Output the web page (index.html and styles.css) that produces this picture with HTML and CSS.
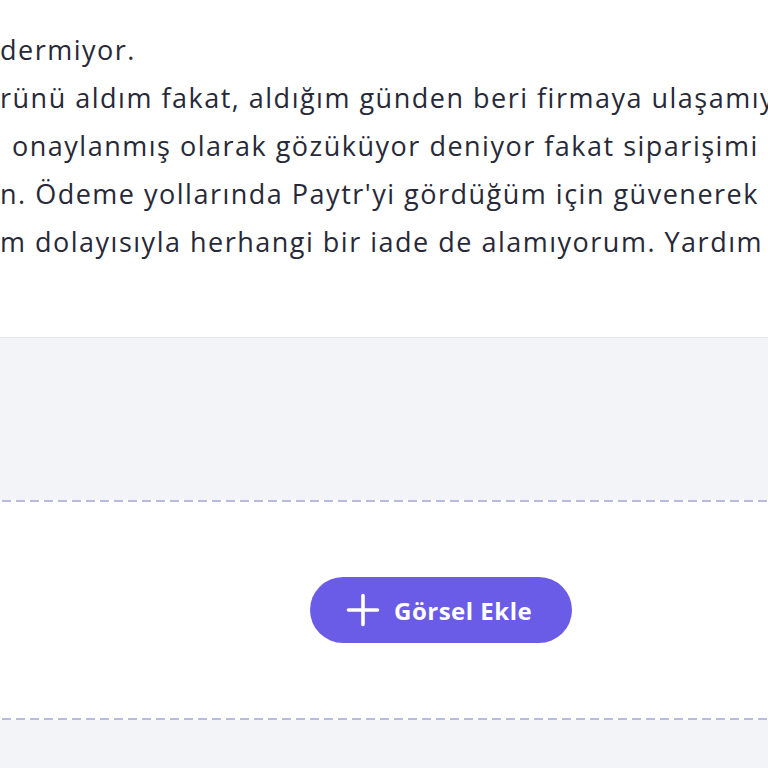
FILE: index.html
```html
<!DOCTYPE html>
<html lang="tr">
<head>
<meta charset="utf-8">
<link rel="stylesheet" href="styles.css">
</head>
<body>
<div class="page">
  <section class="message">
    <div class="line">dermiyor.</div>
    <div class="line">rünü aldım fakat, aldığım günden beri firmaya ulaşamıy</div>
    <div class="line indent">onaylanmış olarak gözüküyor deniyor fakat siparişimi</div>
    <div class="line">n. Ödeme yollarında Paytr'yi gördüğüm için güvenerek</div>
    <div class="line">m dolayısıyla herhangi bir iade de alamıyorum. Yardım</div>
  </section>
  <section class="upload-area">
    <div class="dropzone">
      <button class="add-btn" type="button">
        <svg class="plus" width="34" height="34" viewBox="0 0 34 34" aria-hidden="true">
          <path d="M17 2.5 V31.5 M2.5 17 H31.5" stroke="#fff" stroke-width="3.6" stroke-linecap="round" fill="none"/>
        </svg>
        <span>Görsel Ekle</span>
      </button>
    </div>
  </section>
</div>
</body>
</html>
```
FILE: styles.css
```css
html, body {
  margin: 0;
  padding: 0;
  background: #ffffff;
}
body {
  width: 768px;
  height: 768px;
  overflow: hidden;
  font-family: "Open Sans", "Liberation Sans", sans-serif;
}
.page {
  display: flex;
  flex-direction: column;
  height: 768px;
}
.message {
  padding-top: 26px;
  height: 337px;
  flex: none;
  box-sizing: border-box;
  overflow: hidden;
}
.line {
  font-size: 27px;
  line-height: 48px;
  color: #272938;
  white-space: nowrap;
  letter-spacing: 1.5px;
}
.indent {
  padding-left: 12px;
}
.upload-area {
  flex: 1;
  background: #f3f4f8;
  border-top: 1px solid #e5e6ec;
  padding-top: 162px;
}
.dropzone {
  height: 220px;
  background-color: #ffffff;
  background-image:
    linear-gradient(to right, #b9badf 0 9px, transparent 9px 14px),
    linear-gradient(to right, #b9badf 0 9px, transparent 9px 14px);
  background-size: 14px 2px, 14px 2px;
  background-repeat: repeat-x, repeat-x;
  background-position: 2px 0, 2px 100%;
  display: flex;
  align-items: center;
  justify-content: center;
  padding-left: 114px;
  box-sizing: border-box;
}
.add-btn {
  display: flex;
  align-items: center;
  gap: 14px;
  height: 66px;
  width: 262px;
  padding: 0 0 0 36px;
  border: 0;
  border-radius: 33px;
  background: #6b5ce7;
  color: #ffffff;
  font-family: "Open Sans", "Liberation Sans", sans-serif;
  font-weight: 700;
  font-size: 24px;
  letter-spacing: 0.5px;
  box-sizing: border-box;
}
.plus {
  display: block;
}
```
